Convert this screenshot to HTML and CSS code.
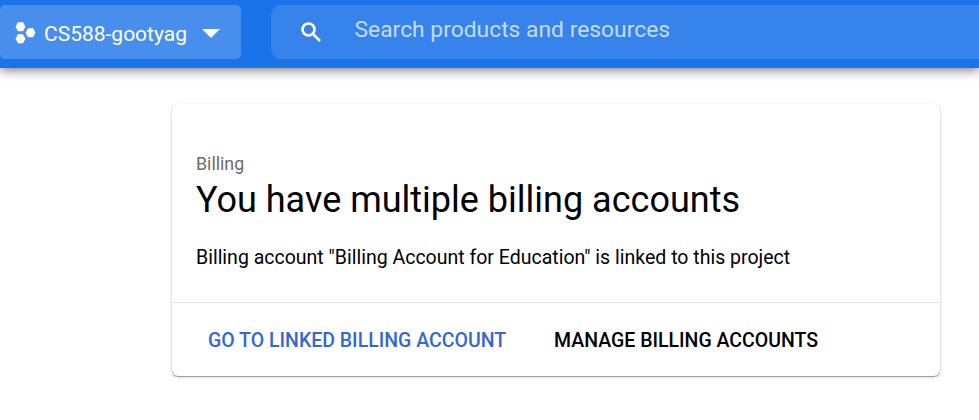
FILE: index.html
```html
<!DOCTYPE html>
<html lang="en">
<head>
    <meta charset="UTF-8">
    <meta name="viewport" content="width=device-width, initial-scale=1.0">
    <title>Billing</title>
    <link rel="stylesheet" href="styles.css">
</head>
<body>
    <header class="topbar">
        <button class="project-picker">
            <svg class="project-icon" viewBox="0 0 21 22" width="21" height="22">
                <path d="M3 .2h5l2.500 4.500L8 9.200H3L.5 4.700z"/>
                <path d="M3 12.200h5l2.500 4.500L8 21.200H3L.5 16.700z"/>
                <path d="M13 6.200h5l2.500 4.500-2.500 4.500h-5l-2.500-4.500z"/>
            </svg>
            <span class="project-name">CS588-gootyag</span>
            <span class="arrow"></span>
        </button>
        <div class="search">
            <svg class="search-icon" viewBox="0 0 20 20" width="20" height="20">
                <circle cx="7.500" cy="7.500" r="6"/>
                <path d="M12 12l7 7"/>
            </svg>
            <span class="search-text">Search products and resources</span>
        </div>
    </header>

    <main class="card">
        <div class="card-body">
            <div class="label">Billing</div>
            <h1>You have multiple billing accounts</h1>
            <p>Billing account "Billing Account for Education" is linked to this project</p>
        </div>
        <div class="card-actions">
            <a class="btn btn-primary">GO TO LINKED BILLING ACCOUNT</a>
            <a class="btn">MANAGE BILLING ACCOUNTS</a>
        </div>
    </main>
</body>
</html>
```
FILE: styles.css
```css
* {
    margin: 0;
    padding: 0;
    box-sizing: border-box;
}

body {
    font-family: Roboto, Arial, sans-serif;
    background: #fff;
    color: #000;
    height: 420px;
    overflow: hidden;
}

.topbar {
    display: flex;
    gap: 30px;
    height: 68px;
    padding-top: 5px;
    background: #1a73e8;
    box-shadow: 0 2px 10px rgba(0, 0, 0, 0.55);
}

.project-picker {
    display: flex;
    align-items: center;
    width: 241px;
    height: 54px;
    padding: 3px 0 0 15px;
    border: none;
    border-radius: 5px;
    background: #488fed;
    color: #fff;
    font-family: inherit;
}

.project-icon {
    margin-bottom: 2px;
    fill: #fff;
}

.project-name {
    width: 143px;
    margin-left: 8px;
    padding-top: 1px;
    font-size: 21px;
    white-space: nowrap;
    text-align: left;
}

.arrow {
    margin-left: 15px;
    border: 9px solid transparent;
    border-top-color: #fff;
    border-bottom: none;
}

.search {
    display: flex;
    align-items: center;
    flex: 1;
    height: 54px;
    padding-left: 30px;
    border-radius: 10px 0 0 10px;
    background: #3683eb;
}

.search-icon {
    fill: none;
    stroke: #fff;
    stroke-width: 2.7;
}

.search-text {
    margin-left: 33.5px;
    padding-bottom: 5px;
    color: #c5dbf9;
    font-size: 22.85px;
    white-space: nowrap;
}

.card {
    width: 768px;
    height: 272px;
    margin: 36px 0 0 172px;
    border-radius: 6px;
    box-shadow: 0 1px 1px rgba(0, 0, 0, 0.3), 0 1px 3px rgba(0, 0, 0, 0.2);
}

.card-body {
    height: 199px;
    padding: 49px 24px 0;
    border-bottom: 1px solid #e4e4e4;
    white-space: nowrap;
}

.label {
    color: #6b6b6b;
    font-size: 17.8px;
    line-height: 22px;
}

h1 {
    padding-top: 1px;
    font-size: 36px;
    font-weight: 400;
    line-height: 48px;
}

p {
    margin-top: 22px;
    font-size: 19.5px;
    line-height: 24px;
}

.card-actions {
    display: flex;
    align-items: center;
    gap: 48px;
    height: 73px;
    padding: 1px 0 0 36px;
}

.btn {
    font-size: 19.5px;
    font-weight: 500;
    white-space: nowrap;
}

.btn-primary {
    color: #3367d6;
}
```
